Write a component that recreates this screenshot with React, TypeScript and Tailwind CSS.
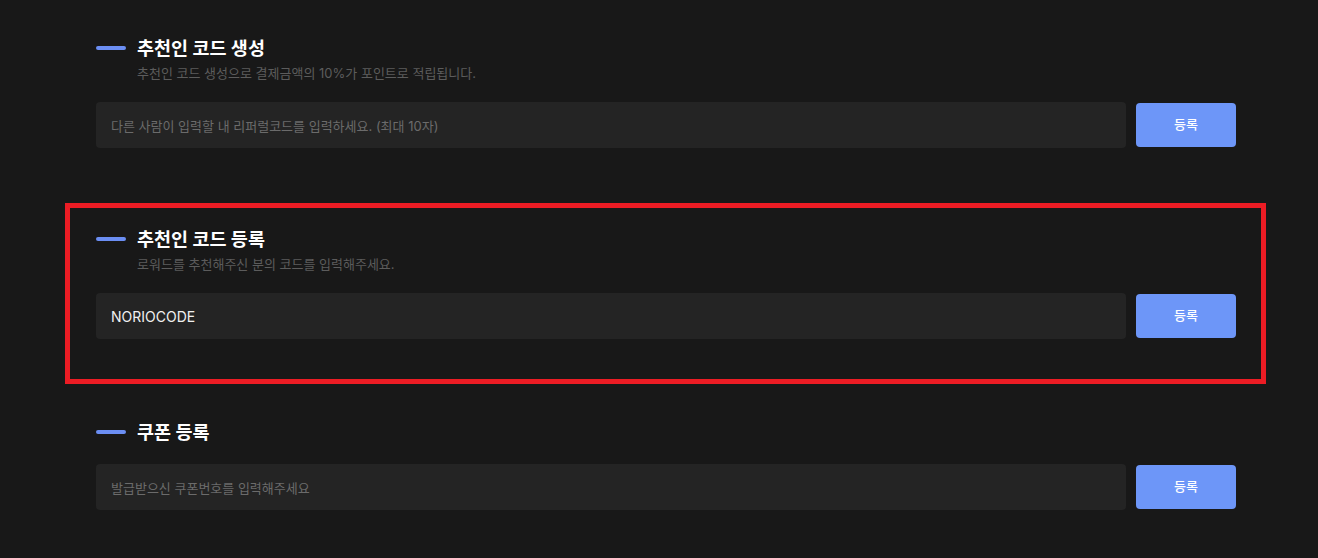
import React, { useState } from 'react';

const font = { fontFamily: 'Inter, "Noto Sans CJK KR", sans-serif' };

type SectionProps = {
  title: string;
  desc?: string;
  placeholder: string;
  value?: string;
};

const CodeSection: React.FC<SectionProps> = ({ title, desc, placeholder, value }) => {
  const [text, setText] = useState(value ?? '');

  return (
    <div>
      <div className="flex items-center gap-[11px]">
        <span className="h-[4px] w-[30px] rounded-full bg-[#6b8ef3]" />
        <h2 className="text-[18.5px] font-bold leading-[26px] text-white">{title}</h2>
      </div>
      {desc && <p className="mt-[2px] pl-[41px] text-[13px] leading-[20px] text-[#5c5c5c]">{desc}</p>}
      <div className="mt-[19px] flex items-center gap-[10px]">
        <input
          className="h-[46px] flex-1 rounded-[4px] bg-[#242424] px-[15px] text-[14px] text-[#f0f0f0] outline-none placeholder:text-[13px] placeholder:text-[#6b6b6b]"
          placeholder={placeholder}
          value={text}
          onChange={(e) => setText(e.target.value)}
          style={font}
        />
        <button className="h-[44px] w-[100px] rounded-[4px] bg-[#6d96f8] text-[13px] font-medium text-white" style={font}>
          등록
        </button>
      </div>
    </div>
  );
};

const App: React.FC = () => {
  return (
    <div className="min-h-screen bg-[#181818]" style={font}>
      <div className="w-[1236px] pl-[96px] pt-[35px] pb-[48px]">
        <CodeSection
          title="추천인 코드 생성"
          desc="추천인 코드 생성으로 결제금액의 10%가 포인트로 적립됩니다."
          placeholder="다른 사람이 입력할 내 리퍼럴코드를 입력하세요. (최대 10자)"
        />

        <div className="-ml-[31px] -mr-[30px] mt-[55px] mb-[35px] border-[5px] border-[#ec1c24] pl-[26px] pr-[25px] pt-[18px] pb-[40px]">
          <CodeSection
            title="추천인 코드 등록"
            desc="로워드를 추천해주신 분의 코드를 입력해주세요."
            placeholder=""
            value="NORIOCODE"
          />
        </div>

        <CodeSection title="쿠폰 등록" placeholder="발급받으신 쿠폰번호를 입력해주세요" />
      </div>
    </div>
  );
};

export default App;
